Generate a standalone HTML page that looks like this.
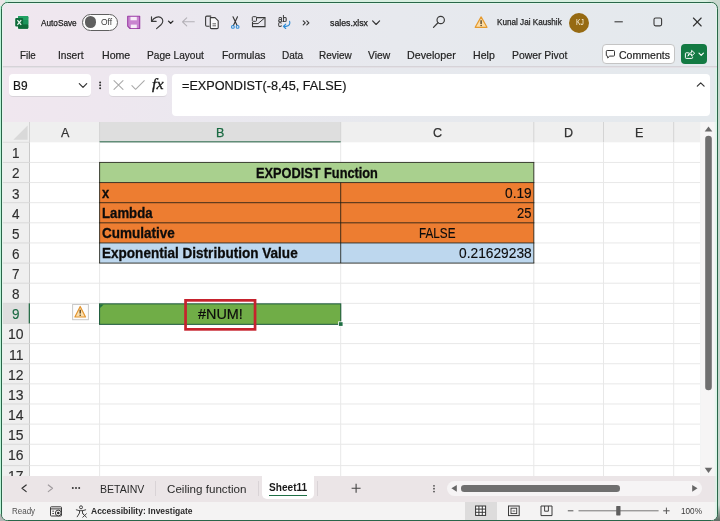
<!DOCTYPE html>
<html><head><meta charset="utf-8"><title>sales.xlsx - Excel</title>
<style>
*{box-sizing:border-box;margin:0;padding:0}
html,body{width:720px;height:521px;overflow:hidden;background:#fff}
body{font-family:"Liberation Sans",sans-serif;color:#222;position:relative}
#outer{position:absolute;left:0;top:0;width:720px;height:521px;background:linear-gradient(90deg,#b9f3d6 0,#b9f3d6 4px,#d8efe0 12px,#d8efe0 706px,#c9d8cf 714px,#c9d8cf 100%)}
#win{position:absolute;left:1px;top:2px;width:717px;height:519px;border:1px solid #2a664a;border-radius:6.5px;box-shadow:inset 0 0 0 1px #e0f5e9;
 background:linear-gradient(90deg,#f0e7ef 0%,#eee7ef 14%,#eae8ef 30%,#e7e9ee 55%,#e4e9ed 100%)}
#ui{position:absolute;left:0;top:0;width:720px;height:521px;overflow:hidden;will-change:transform;clip-path:inset(3px 3px 1px 2px round 5.5px)}
.clip{position:absolute;left:0;top:0;width:720px;height:521px}
.t{position:absolute;white-space:nowrap;line-height:1;transform-origin:0 0}
.r{position:absolute}
</style></head><body>
<div id="outer"></div>
<div style="position:absolute;left:0;top:0;width:5px;height:6px;background:#ebe6e8"></div>
<div style="position:absolute;left:0;top:514px;width:5px;height:7px;background:#b3b6b4"></div>
<div style="position:absolute;left:714px;top:505px;width:6px;height:16px;background:linear-gradient(180deg,#c9d8cf,#5d6b63)"></div>
<div id="win"></div>
<div id="ui">
<!-- title bar -->
<span class="t" style="left:41.20px;top:18.62px;font-size:8.60px;font-weight:400;color:#1c1c1c;-webkit-text-stroke:.25px #1c1c1c;transform:scaleX(0.9572);">AutoSave</span>
<div class="r" style="left:82px;top:14px;width:36px;height:17px;border:1px solid #5f5f5f;border-radius:9px;background:#fcfcfc"></div>
<div class="r" style="left:84.6px;top:16.4px;width:11.400px;height:11.400px;border-radius:50%;background:#5e5e5e"></div>
<span class="t" style="left:100.70px;top:18.96px;font-size:8.20px;font-weight:400;color:#3a3a3a;transform:scaleX(1.0291);">Off</span>
<span class="t" style="left:330.00px;top:18.55px;font-size:8.80px;font-weight:400;color:#1c1c1c;-webkit-text-stroke:.25px #1c1c1c;transform:scaleX(0.9962);">sales.xlsx</span>
<span class="t" style="left:496.80px;top:18.28px;font-size:9.00px;font-weight:400;color:#1c1c1c;-webkit-text-stroke:.25px #1c1c1c;transform:scaleX(0.9043);">Kunal Jai Kaushik</span>
<div class="r" style="left:569.4px;top:12.5px;width:20px;height:20px;border-radius:50%;background:#966a12"></div>
<span class="t" style="left:575.60px;top:18.76px;font-size:8.20px;font-weight:400;color:#fbf3df;transform:scaleX(0.8151);">KJ</span>
<svg class="r" style="left:0;top:0" width="720" height="42" viewBox="0 0 720 42">
<!-- excel logo -->
<rect x="14.400" y="15.400" width="14.600" height="14" rx="2" fill="#f6f3f6" opacity=".55"/>
<rect x="18" y="16" width="10.300" height="12.800" rx="1.200" fill="#17864d"/>
<rect x="18" y="16" width="10.300" height="4.300" rx="1" fill="#22a163"/>
<rect x="23" y="20.200" width="5.300" height="4.300" fill="#1a935a"/>
<rect x="18" y="24.500" width="10.300" height="4.300" rx="1" fill="#0f6a39"/>
<rect x="15.200" y="18" width="7.900" height="8.500" rx="1" fill="#0e6b3a"/>
<path d="M17.400 20.100L21.200 24.800M21.200 20.100L17.400 24.800" stroke="#e9f6ee" stroke-width="1.250" fill="none"/>
<!-- save -->
<path d="M127.700 16.300H139.700V28.500H130L127.700 26.200Z" fill="#c985d0" stroke="#9b3fa5" stroke-width="1.100" stroke-linejoin="round"/>
<rect x="130.500" y="16.900" width="6.300" height="3.400" fill="#f7ecf8"/>
<rect x="130.800" y="24.600" width="6" height="3.500" fill="#f7ecf8"/>
<!-- undo -->
<path d="M151.500 16.700V21.300H156.200" fill="none" stroke="#3a3a3a" stroke-width="1.150" stroke-linecap="round" stroke-linejoin="round"/>
<path d="M151.800 21.100C154 17.600 158 15.800 160.800 17.600C163.600 19.400 163.300 22.600 161 24.800L156.600 28.600" fill="none" stroke="#3a3a3a" stroke-width="1.150" stroke-linecap="round"/>
<path d="M168.500 21.100L170.700 23.200L172.900 21.100" fill="none" stroke="#2a2a2a" stroke-width="1.300" stroke-linecap="round" stroke-linejoin="round"/>
<!-- redo (disabled arrow) -->
<path d="M194.300 21.800H182.600M186.700 17.800L182.500 21.800L186.700 25.800" fill="none" stroke="#b3b0b6" stroke-width="1.100" stroke-linecap="round" stroke-linejoin="round"/>
<!-- copy -->
<path d="M209.500 26.300H206.800Q205.600 26.300 205.600 25.100V17.300Q205.600 16.100 206.800 16.100H211.200" fill="none" stroke="#3a3a3a" stroke-width="1.100"/>
<path d="M210.300 17.600H215L218.200 20.800V27.400Q218.200 28.600 217 28.600H211.500Q210.300 28.600 210.300 27.400Z" fill="#fafafa" stroke="#3a3a3a" stroke-width="1.100" stroke-linejoin="round"/>
<path d="M212.500 23.800H216M212.500 25.800H216" stroke="#555" stroke-width=".9"/>
<!-- cut -->
<path d="M233 16.800L237.100 25.500M237.500 16.800L233.400 25.500" stroke="#333" stroke-width="1.100" stroke-linecap="round"/>
<circle cx="232.900" cy="26.900" r="1.400" fill="none" stroke="#2d8bd6" stroke-width="1.100"/>
<circle cx="237.600" cy="26.900" r="1.400" fill="none" stroke="#2d8bd6" stroke-width="1.100"/>
<!-- form icon -->
<path d="M256.500 17.600H265V26.600H252.500V22" fill="none" stroke="#3a3a3a" stroke-width="1.100"/>
<rect x="252.300" y="16.700" width="4.200" height="4.600" rx=".8" fill="none" stroke="#3a3a3a" stroke-width="1"/>
<path d="M252.500 23.600H258L264.600 18" fill="none" stroke="#3a3a3a" stroke-width="1"/>
<!-- chevrons >> -->
<path d="M303.200 20.900L305.300 22.900L303.200 24.900M306.800 20.900L308.900 22.900L306.800 24.900" fill="none" stroke="#333" stroke-width="1.100" stroke-linecap="round" stroke-linejoin="round"/>
<!-- title caret -->
<path d="M372.600 20.900L376.100 24.500L379.600 20.900" fill="none" stroke="#333" stroke-width="1.150" stroke-linecap="round" stroke-linejoin="round"/>
<!-- search -->
<circle cx="440.700" cy="20" r="3.700" fill="none" stroke="#3a3a3a" stroke-width="1.150"/>
<path d="M438 22.800L433.500 27.400" stroke="#3a3a3a" stroke-width="1.250" stroke-linecap="round"/>
<!-- warning -->
<path d="M481.100 16.900L487 27.300H475.200Z" fill="#fbdca6" stroke="#e59a2e" stroke-width="1.200" stroke-linejoin="round"/>
<path d="M481.100 20.200V24" stroke="#4d3b1c" stroke-width="1.300"/>
<circle cx="481.100" cy="25.500" r=".75" fill="#4d3b1c"/>
<!-- window controls -->
<path d="M614.500 21.800H622.800" stroke="#3a3a3a" stroke-width="1.100"/>
<rect x="654" y="18" width="7.600" height="7.900" rx="1.600" fill="none" stroke="#3a3a3a" stroke-width="1.100"/>
<path d="M693.400 18L701.200 26M701.200 18L693.400 26" stroke="#333" stroke-width="1.100" stroke-linecap="round"/>
</svg>
<span class="t" style="left:278.00px;top:15.66px;font-size:8.20px;font-weight:400;color:#2a2a2a;-webkit-text-stroke:.2px #2a2a2a;transform:scaleX(0.9867);">ab</span>
<span class="t" style="left:278.00px;top:21.46px;font-size:8.20px;font-weight:400;color:#2a2a2a;-webkit-text-stroke:.2px #2a2a2a;transform:scaleX(0.9268);">c</span>
<svg class="r" style="left:280px;top:20px" width="12" height="10" viewBox="280 20 12 10"><path d="M289.600 21.400Q291 25.400 286 26.400H283.600M285.700 24.200L283.400 26.400L285.700 28.500" fill="none" stroke="#2d8bd6" stroke-width="1.150" stroke-linecap="round" stroke-linejoin="round"/></svg>
<!-- ribbon tabs -->
<span class="t" style="left:20.00px;top:50.22px;font-size:11.20px;font-weight:400;color:#222;-webkit-text-stroke:.2px #222;transform:scaleX(0.8755);">File</span>
<span class="t" style="left:58.30px;top:50.22px;font-size:11.20px;font-weight:400;color:#222;-webkit-text-stroke:.2px #222;transform:scaleX(0.9103);">Insert</span>
<span class="t" style="left:101.50px;top:50.22px;font-size:11.20px;font-weight:400;color:#222;-webkit-text-stroke:.2px #222;transform:scaleX(0.9472);">Home</span>
<span class="t" style="left:147.30px;top:50.22px;font-size:11.20px;font-weight:400;color:#222;-webkit-text-stroke:.2px #222;transform:scaleX(0.9062);">Page Layout</span>
<span class="t" style="left:221.80px;top:50.22px;font-size:11.20px;font-weight:400;color:#222;-webkit-text-stroke:.2px #222;transform:scaleX(0.9319);">Formulas</span>
<span class="t" style="left:281.80px;top:50.22px;font-size:11.20px;font-weight:400;color:#222;-webkit-text-stroke:.2px #222;transform:scaleX(0.8961);">Data</span>
<span class="t" style="left:319.30px;top:50.22px;font-size:11.20px;font-weight:400;color:#222;-webkit-text-stroke:.2px #222;transform:scaleX(0.8904);">Review</span>
<span class="t" style="left:368.30px;top:50.22px;font-size:11.20px;font-weight:400;color:#222;-webkit-text-stroke:.2px #222;transform:scaleX(0.9221);">View</span>
<span class="t" style="left:407.00px;top:50.22px;font-size:11.20px;font-weight:400;color:#222;-webkit-text-stroke:.2px #222;transform:scaleX(0.9559);">Developer</span>
<span class="t" style="left:472.50px;top:50.22px;font-size:11.20px;font-weight:400;color:#222;-webkit-text-stroke:.2px #222;transform:scaleX(0.9464);">Help</span>
<span class="t" style="left:511.50px;top:50.22px;font-size:11.20px;font-weight:400;color:#222;-webkit-text-stroke:.2px #222;transform:scaleX(0.9287);">Power Pivot</span>
<div class="r" style="left:602px;top:44px;width:73px;height:20px;border:1px solid #c4c4c4;border-radius:4px;background:#fefefe"></div>
<span class="t" style="left:619.00px;top:50.22px;font-size:11.20px;font-weight:400;color:#222;-webkit-text-stroke:.2px #222;transform:scaleX(0.9419);">Comments</span>
<div class="r" style="left:681px;top:44px;width:26px;height:20px;border-radius:4px;background:#137a43"></div>
<svg class="r" style="left:600px;top:42px" width="120" height="26" viewBox="600 42 120 26">
<path d="M607.200 50.500H613.600Q614.500 50.500 614.500 51.400V55.200Q614.500 56.100 613.600 56.100H609.700L607.700 58V56.100H607.200Q606.300 56.100 606.300 55.200V51.400Q606.300 50.500 607.200 50.500Z" fill="none" stroke="#333" stroke-width="1" stroke-linejoin="round"/>
<path d="M688.800 52.800H686.200Q685.400 52.800 685.400 53.600V57.600Q685.400 58.400 686.200 58.400H691.800Q692.600 58.400 692.600 57.600V56.600" fill="none" stroke="#fff" stroke-width="1"/>
<path d="M687.900 56.200Q688.300 52.600 691.600 52.400V50.400L694.700 53.200L691.600 56V54Q689.300 54 687.900 56.200Z" fill="none" stroke="#fff" stroke-width=".95" stroke-linejoin="round"/>
<path d="M699 53.200L701.200 55.300L703.400 53.200" fill="none" stroke="#fff" stroke-width="1.150" stroke-linecap="round" stroke-linejoin="round"/>
</svg>
<div class="r" style="left:2.00px;top:66.00px;width:715.00px;height:1.00px;background:#d6d3d8;"></div>
<div class="r" style="left:2.00px;top:67.00px;width:715.00px;height:1.00px;background:#e3e0e5;"></div>
<!-- formula bar -->
<div class="r" style="left:9px;top:74px;width:82px;height:22.500px;border-radius:4px;background:#fff;border-bottom:1px solid #d8d3d9"></div>
<span class="t" style="left:13.20px;top:78.83px;font-size:13.20px;font-weight:400;color:#161616;-webkit-text-stroke:.2px #161616;transform:scaleX(0.9042);">B9</span>
<div class="r" style="left:109px;top:74px;width:58px;height:22.500px;border-radius:4px;background:#fff;border-bottom:1px solid #d8d3d9"></div>
<div class="r" style="left:172px;top:74px;width:538px;height:42px;border-radius:4px;background:#fff"></div>
<span class="t" style="left:182.00px;top:79.26px;font-size:13.40px;font-weight:400;color:#161616;-webkit-text-stroke:.2px #161616;transform:scaleX(0.9460);">=EXPONDIST(-8,45, FALSE)</span>
<span class="t" style="left:152.2px;top:77px;font-family:'Liberation Serif',serif;font-style:italic;font-weight:400;font-size:14.5px;color:#1a1a1a;-webkit-text-stroke:.35px #1a1a1a;transform:scaleX(1.1)">fx</span>
<svg class="r" style="left:0;top:70px" width="720" height="50" viewBox="0 70 720 50">
<path d="M79.300 83.700L83 87.400L86.700 83.700" fill="none" stroke="#333" stroke-width="1.200" stroke-linecap="round" stroke-linejoin="round"/>
<circle cx="100.100" cy="82.400" r="1" fill="#333"/><circle cx="100.100" cy="85.300" r="1" fill="#333"/><circle cx="100.100" cy="88.200" r="1" fill="#333"/>
<path d="M114 80.600L123 89.400M123 80.600L114 89.400" stroke="#a9a9a9" stroke-width="1.050" stroke-linecap="round"/>
<path d="M131.900 85.600L135.600 89.300L144.300 80.700" fill="none" stroke="#a9a9a9" stroke-width="1.050" stroke-linecap="round" stroke-linejoin="round"/>
<path d="M697.300 86.200L700.700 82.800L704.100 86.200" fill="none" stroke="#333" stroke-width="1.200" stroke-linecap="round" stroke-linejoin="round"/>
</svg>
<!-- grid -->
<div class="clip" style="clip-path:inset(122px 3px 45px 2px)">
<svg class="r" style="left:0;top:0" width="720" height="521" viewBox="0 0 720 521"><rect x="2.00" y="122.00" width="698.20" height="355.00" fill="#fff"/><rect x="2.00" y="122.00" width="698.20" height="20.30" fill="#efefef"/><rect x="2.00" y="142.30" width="27.50" height="335.00" fill="#efefef"/><rect x="99.60" y="122.00" width="241.10" height="20.30" fill="#dedede"/><rect x="2.00" y="303.34" width="27.50" height="20.13" fill="#dedede"/><rect x="29.00" y="122.00" width="1.00" height="20.30" fill="#d4d4d4"/><rect x="29.00" y="142.30" width="1.00" height="335.00" fill="#c9c9c9"/><rect x="99.10" y="122.00" width="1.00" height="20.30" fill="#d4d4d4"/><rect x="99.10" y="142.30" width="1.00" height="335.00" fill="#e8e8e8"/><rect x="340.20" y="122.00" width="1.00" height="20.30" fill="#d4d4d4"/><rect x="340.20" y="142.30" width="1.00" height="335.00" fill="#e8e8e8"/><rect x="533.30" y="122.00" width="1.00" height="20.30" fill="#d4d4d4"/><rect x="533.30" y="142.30" width="1.00" height="335.00" fill="#e8e8e8"/><rect x="603.00" y="122.00" width="1.00" height="20.30" fill="#d4d4d4"/><rect x="603.00" y="142.30" width="1.00" height="335.00" fill="#e8e8e8"/><rect x="673.20" y="122.00" width="1.00" height="20.30" fill="#d4d4d4"/><rect x="673.20" y="142.30" width="1.00" height="335.00" fill="#e8e8e8"/><rect x="29.50" y="161.93" width="670.70" height="1.00" fill="#e8e8e8"/><rect x="2.00" y="161.93" width="27.50" height="1.00" fill="#d9d9d9"/><rect x="29.50" y="182.06" width="670.70" height="1.00" fill="#e8e8e8"/><rect x="2.00" y="182.06" width="27.50" height="1.00" fill="#d9d9d9"/><rect x="29.50" y="202.19" width="670.70" height="1.00" fill="#e8e8e8"/><rect x="2.00" y="202.19" width="27.50" height="1.00" fill="#d9d9d9"/><rect x="29.50" y="222.32" width="670.70" height="1.00" fill="#e8e8e8"/><rect x="2.00" y="222.32" width="27.50" height="1.00" fill="#d9d9d9"/><rect x="29.50" y="242.45" width="670.70" height="1.00" fill="#e8e8e8"/><rect x="2.00" y="242.45" width="27.50" height="1.00" fill="#d9d9d9"/><rect x="29.50" y="262.58" width="670.70" height="1.00" fill="#e8e8e8"/><rect x="2.00" y="262.58" width="27.50" height="1.00" fill="#d9d9d9"/><rect x="29.50" y="282.71" width="670.70" height="1.00" fill="#e8e8e8"/><rect x="2.00" y="282.71" width="27.50" height="1.00" fill="#d9d9d9"/><rect x="29.50" y="302.84" width="670.70" height="1.00" fill="#e8e8e8"/><rect x="2.00" y="302.84" width="27.50" height="1.00" fill="#d9d9d9"/><rect x="29.50" y="322.97" width="670.70" height="1.00" fill="#e8e8e8"/><rect x="2.00" y="322.97" width="27.50" height="1.00" fill="#d9d9d9"/><rect x="29.50" y="343.10" width="670.70" height="1.00" fill="#e8e8e8"/><rect x="2.00" y="343.10" width="27.50" height="1.00" fill="#d9d9d9"/><rect x="29.50" y="363.23" width="670.70" height="1.00" fill="#e8e8e8"/><rect x="2.00" y="363.23" width="27.50" height="1.00" fill="#d9d9d9"/><rect x="29.50" y="383.36" width="670.70" height="1.00" fill="#e8e8e8"/><rect x="2.00" y="383.36" width="27.50" height="1.00" fill="#d9d9d9"/><rect x="29.50" y="403.49" width="670.70" height="1.00" fill="#e8e8e8"/><rect x="2.00" y="403.49" width="27.50" height="1.00" fill="#d9d9d9"/><rect x="29.50" y="423.62" width="670.70" height="1.00" fill="#e8e8e8"/><rect x="2.00" y="423.62" width="27.50" height="1.00" fill="#d9d9d9"/><rect x="29.50" y="443.75" width="670.70" height="1.00" fill="#e8e8e8"/><rect x="2.00" y="443.75" width="27.50" height="1.00" fill="#d9d9d9"/><rect x="29.50" y="465.10" width="670.70" height="1.00" fill="#e8e8e8"/><rect x="2.00" y="465.10" width="27.50" height="1.00" fill="#d9d9d9"/><rect x="2.00" y="141.80" width="27.50" height="1.00" fill="#dcdcdc"/><rect x="99.60" y="141.20" width="241.10" height="1.20" fill="#44795f"/><rect x="28.70" y="303.34" width="1.30" height="20.13" fill="#2a6e4a"/><path d="M27.6 125.4V139.8H13.3Z" fill="#d9d9d9"/><rect x="99.60" y="162.43" width="434.20" height="20.13" fill="#a9d08e"/><rect x="99.60" y="182.56" width="434.20" height="60.39" fill="#ed7d31"/><rect x="99.60" y="242.95" width="434.20" height="20.13" fill="#bdd7ee"/><rect x="99.10" y="161.93" width="435.20" height="1.00" fill="#1c1c14" opacity=".82"/><rect x="99.10" y="182.06" width="435.20" height="1.00" fill="#1c1c14" opacity=".82"/><rect x="99.10" y="202.19" width="435.20" height="1.00" fill="#1c1c14" opacity=".82"/><rect x="99.10" y="222.32" width="435.20" height="1.00" fill="#1c1c14" opacity=".82"/><rect x="99.10" y="242.45" width="435.20" height="1.00" fill="#1c1c14" opacity=".82"/><rect x="99.10" y="262.58" width="435.20" height="1.00" fill="#1c1c14" opacity=".82"/><rect x="99.10" y="162.43" width="1.00" height="100.65" fill="#1c1c14" opacity=".82"/><rect x="533.30" y="162.43" width="1.00" height="100.65" fill="#1c1c14" opacity=".82"/><rect x="340.20" y="182.56" width="1.00" height="80.52" fill="#1c1c14" opacity=".82"/><rect x="99.00" y="303.30" width="242.30" height="21.60" fill="#235f3f"/><rect x="100.10" y="304.40" width="240.10" height="19.40" fill="#70ad47"/><path d="M100.10 304.40h3.6l-3.600 3.600Z" fill="#1f6e43"/><rect x="338.10" y="321.40" width="5.00" height="5.00" fill="#fff"/><rect x="338.90" y="322.20" width="3.70" height="3.70" fill="#1f6e43"/><rect x="185.55" y="300.35" width="69.5" height="29" fill="none" stroke="#c6222d" stroke-width="2.7"/><rect x="72.6" y="304.5" width="15.8" height="15.2" fill="#fdfdfd" stroke="#c9c9c9" stroke-width="1"/><path d="M80.2 306.5L85.5 317H74.9Z" fill="#fbdfae" stroke="#e2942f" stroke-width="1.2" stroke-linejoin="round"/><path d="M80.2 309.7V313.6" stroke="#4d3b1c" stroke-width="1.3"/><circle cx="80.2" cy="315.2" r=".75" fill="#4d3b1c"/><rect x="700.20" y="122.00" width="17.00" height="355.00" fill="#f6f5f5"/><path d="M708.5 126.4L712.3 131.6H704.7Z" fill="#6a6a6a"/><rect x="705.2" y="135.8" width="6.6" height="254.4" rx="3.3" fill="#6f6f6f"/><path d="M708.5 473L712.3 467.8H704.7Z" fill="#6a6a6a"/></svg>
<span class="t" style="left:61.12px;top:126.13px;font-size:13.20px;font-weight:400;color:#333;-webkit-text-stroke:.25px #333;transform:scaleX(0.9500);">A</span>
<span class="t" style="left:216.12px;top:126.13px;font-size:13.20px;font-weight:400;color:#1a6a42;-webkit-text-stroke:.25px #1a6a42;transform:scaleX(0.9500);">B</span>
<span class="t" style="left:432.67px;top:126.13px;font-size:13.20px;font-weight:400;color:#333;-webkit-text-stroke:.25px #333;transform:scaleX(0.9500);">C</span>
<span class="t" style="left:563.97px;top:126.13px;font-size:13.20px;font-weight:400;color:#333;-webkit-text-stroke:.25px #333;transform:scaleX(0.9500);">D</span>
<span class="t" style="left:634.62px;top:126.13px;font-size:13.20px;font-weight:400;color:#333;-webkit-text-stroke:.25px #333;transform:scaleX(0.9500);">E</span>
<span class="t" style="left:12.15px;top:145.30px;font-size:15.00px;font-weight:400;color:#2e2e2e;-webkit-text-stroke:.15px #2e2e2e;transform:scaleX(0.9000);">1</span>
<span class="t" style="left:12.15px;top:165.43px;font-size:15.00px;font-weight:400;color:#2e2e2e;-webkit-text-stroke:.15px #2e2e2e;transform:scaleX(0.9000);">2</span>
<span class="t" style="left:12.15px;top:185.56px;font-size:15.00px;font-weight:400;color:#2e2e2e;-webkit-text-stroke:.15px #2e2e2e;transform:scaleX(0.9000);">3</span>
<span class="t" style="left:12.15px;top:205.69px;font-size:15.00px;font-weight:400;color:#2e2e2e;-webkit-text-stroke:.15px #2e2e2e;transform:scaleX(0.9000);">4</span>
<span class="t" style="left:12.15px;top:225.82px;font-size:15.00px;font-weight:400;color:#2e2e2e;-webkit-text-stroke:.15px #2e2e2e;transform:scaleX(0.9000);">5</span>
<span class="t" style="left:12.15px;top:245.95px;font-size:15.00px;font-weight:400;color:#2e2e2e;-webkit-text-stroke:.15px #2e2e2e;transform:scaleX(0.9000);">6</span>
<span class="t" style="left:12.15px;top:266.08px;font-size:15.00px;font-weight:400;color:#2e2e2e;-webkit-text-stroke:.15px #2e2e2e;transform:scaleX(0.9000);">7</span>
<span class="t" style="left:12.15px;top:286.21px;font-size:15.00px;font-weight:400;color:#2e2e2e;-webkit-text-stroke:.15px #2e2e2e;transform:scaleX(0.9000);">8</span>
<span class="t" style="left:12.15px;top:306.34px;font-size:15.00px;font-weight:400;color:#1a6a42;-webkit-text-stroke:.15px #1a6a42;transform:scaleX(0.9000);">9</span>
<span class="t" style="left:8.24px;top:326.47px;font-size:15.00px;font-weight:400;color:#2e2e2e;-webkit-text-stroke:.15px #2e2e2e;transform:scaleX(0.9300);">10</span>
<span class="t" style="left:8.76px;top:346.60px;font-size:15.00px;font-weight:400;color:#2e2e2e;-webkit-text-stroke:.15px #2e2e2e;transform:scaleX(0.9300);">11</span>
<span class="t" style="left:8.24px;top:366.73px;font-size:15.00px;font-weight:400;color:#2e2e2e;-webkit-text-stroke:.15px #2e2e2e;transform:scaleX(0.9300);">12</span>
<span class="t" style="left:8.24px;top:386.86px;font-size:15.00px;font-weight:400;color:#2e2e2e;-webkit-text-stroke:.15px #2e2e2e;transform:scaleX(0.9300);">13</span>
<span class="t" style="left:8.24px;top:406.99px;font-size:15.00px;font-weight:400;color:#2e2e2e;-webkit-text-stroke:.15px #2e2e2e;transform:scaleX(0.9300);">14</span>
<span class="t" style="left:8.24px;top:427.12px;font-size:15.00px;font-weight:400;color:#2e2e2e;-webkit-text-stroke:.15px #2e2e2e;transform:scaleX(0.9300);">15</span>
<span class="t" style="left:8.24px;top:447.25px;font-size:15.00px;font-weight:400;color:#2e2e2e;-webkit-text-stroke:.15px #2e2e2e;transform:scaleX(0.9300);">16</span>
<span class="t" style="left:8.24px;top:468.20px;font-size:15.00px;font-weight:400;color:#2e2e2e;-webkit-text-stroke:.15px #2e2e2e;transform:scaleX(0.9300);">17</span>
<span class="t" style="left:256.00px;top:165.97px;font-size:14.40px;font-weight:700;color:#0c0c0c;-webkit-text-stroke:.3px #0c0c0c;transform:scaleX(0.8866);">EXPODIST Function</span>
<span class="t" style="left:101.60px;top:186.10px;font-size:14.40px;font-weight:700;color:#0c0c0c;-webkit-text-stroke:.3px #0c0c0c;transform:scaleX(0.8990);">x</span>
<span class="t" style="left:101.70px;top:206.23px;font-size:14.40px;font-weight:700;color:#0c0c0c;-webkit-text-stroke:.3px #0c0c0c;transform:scaleX(0.9165);">Lambda</span>
<span class="t" style="left:101.70px;top:226.36px;font-size:14.40px;font-weight:700;color:#0c0c0c;-webkit-text-stroke:.3px #0c0c0c;transform:scaleX(0.9379);">Cumulative</span>
<span class="t" style="left:101.70px;top:246.49px;font-size:14.40px;font-weight:700;color:#0c0c0c;-webkit-text-stroke:.3px #0c0c0c;transform:scaleX(0.9412);">Exponential Distribution Value</span>
<span class="t" style="left:504.50px;top:184.69px;font-size:15.00px;font-weight:400;color:#0c0c0c;-webkit-text-stroke:.15px #0c0c0c;transform:scaleX(0.9145);">0.19</span>
<span class="t" style="left:516.80px;top:204.82px;font-size:15.00px;font-weight:400;color:#0c0c0c;-webkit-text-stroke:.15px #0c0c0c;transform:scaleX(0.8630);">25</span>
<span class="t" style="left:419.00px;top:224.95px;font-size:15.00px;font-weight:400;color:#0c0c0c;-webkit-text-stroke:.15px #0c0c0c;transform:scaleX(0.7817);">FALSE</span>
<span class="t" style="left:458.50px;top:245.08px;font-size:15.00px;font-weight:400;color:#0c0c0c;-webkit-text-stroke:.15px #0c0c0c;transform:scaleX(0.9173);">0.21629238</span>
<span class="t" style="left:197.80px;top:306.47px;font-size:15.00px;font-weight:400;color:#0c0c0c;-webkit-text-stroke:.2px #0c0c0c;transform:scaleX(0.9599);">#NUM!</span>
</div>
<!-- sheet tabs -->
<div class="r" style="left:2.00px;top:476.00px;width:715.00px;height:26.00px;background:#ebe5e7;"></div>
<span class="t" style="left:99.80px;top:484.21px;font-size:11.80px;font-weight:400;color:#2a2a2a;transform:scaleX(0.8949);">BETAINV</span>
<span class="t" style="left:167.00px;top:484.21px;font-size:11.80px;font-weight:400;color:#2a2a2a;transform:scaleX(0.9841);">Ceiling function</span>
<div class="r" style="left:261.5px;top:476px;width:52.5px;height:22.5px;border-radius:0 0 5px 5px;background:#fff"></div>
<span class="t" style="left:268.90px;top:482.01px;font-size:11.80px;font-weight:700;color:#1a1a1a;transform:scaleX(0.8563);">Sheet11</span>
<div class="r" style="left:268.90px;top:494.50px;width:38.20px;height:1.70px;background:#1e6f45;"></div>
<div class="r" style="left:155.00px;top:481.00px;width:1.00px;height:15.00px;background:#d9d3d6;"></div>
<div class="r" style="left:258.30px;top:481.00px;width:1.00px;height:15.00px;background:#d9d3d6;"></div>
<div class="r" style="left:316.50px;top:481.00px;width:1.00px;height:15.00px;background:#d9d3d6;"></div>
<div class="r" style="left:447px;top:481px;width:255px;height:14.5px;border-radius:7.5px;background:#f6f4f5"></div>
<div class="r" style="left:461.4px;top:485px;width:158.4px;height:6.6px;border-radius:3.3px;background:#6f6f6f"></div>
<svg class="r" style="left:0;top:476px" width="720" height="45" viewBox="0 476 720 45">
<path d="M26.200 485L22 488.300L26.200 491.600" fill="none" stroke="#333" stroke-width="1.200" stroke-linecap="round" stroke-linejoin="round"/>
<path d="M48.300 485L52.500 488.300L48.300 491.600" fill="none" stroke="#a09b9e" stroke-width="1.200" stroke-linecap="round" stroke-linejoin="round"/>
<circle cx="72.800" cy="488.100" r="1" fill="#333"/><circle cx="76" cy="488.100" r="1" fill="#333"/><circle cx="79.200" cy="488.100" r="1" fill="#333"/>
<path d="M351.600 488.300H360.600M356.100 483.800V492.800" stroke="#444" stroke-width="1.100"/>
<circle cx="434" cy="485.800" r=".85" fill="#444"/><circle cx="434" cy="488.700" r=".85" fill="#444"/><circle cx="434" cy="491.600" r=".85" fill="#444"/>
<path d="M456.800 484.900L451.400 488.300L456.800 491.700Z" fill="#666"/>
<path d="M692.200 484.900L697.500 488.300L692.200 491.700Z" fill="#666"/>
</svg>
<!-- status bar -->
<div class="r" style="left:2.00px;top:502.00px;width:715.00px;height:19.00px;background:#f4f3f3;"></div>
<span class="t" style="left:11.90px;top:507.45px;font-size:8.80px;font-weight:400;color:#505050;transform:scaleX(0.9081);">Ready</span>
<span class="t" style="left:90.80px;top:507.45px;font-size:8.80px;font-weight:700;color:#2a2a2a;transform:scaleX(0.9652);">Accessibility: Investigate</span>
<span class="t" style="left:680.60px;top:507.45px;font-size:8.80px;font-weight:400;color:#3a3a3a;transform:scaleX(0.9286);">100%</span>
<div class="r" style="left:464.70px;top:502.00px;width:32.30px;height:19.00px;background:#dddcdc;"></div>
<svg class="r" style="left:0;top:500px" width="720" height="21" viewBox="0 500 720 21">
<!-- macro record icon -->
<rect x="50.500" y="506.800" width="11" height="9.200" rx=".8" fill="none" stroke="#3a3a3a" stroke-width="1"/>
<path d="M50.500 508.900H61.500" stroke="#3a3a3a" stroke-width="1"/>
<path d="M52.300 511.200H54M52.300 513.500H54" stroke="#3a3a3a" stroke-width=".9"/>
<circle cx="58.300" cy="513" r="2.900" fill="#f3f2f2" stroke="#3a3a3a" stroke-width="1"/>
<circle cx="58.300" cy="513" r="1.300" fill="#2a2a2a"/>
<!-- accessibility icon -->
<circle cx="81" cy="507.300" r="1.500" fill="none" stroke="#3a3a3a" stroke-width=".95"/>
<path d="M76.300 509.800L79.500 510.700V513L77.200 516.800M85.700 509.800L82.500 510.700V513L83.600 514.500M79.500 510.700H82.500" fill="none" stroke="#3a3a3a" stroke-width=".95" stroke-linecap="round" stroke-linejoin="round"/>
<path d="M82.800 513.800L86.400 517.200M86.400 513.800L82.800 517.200" stroke="#3a3a3a" stroke-width=".95" stroke-linecap="round"/>
<!-- view: normal -->
<rect x="475.600" y="506" width="10" height="9.400" fill="#fff" stroke="#333" stroke-width="1"/>
<path d="M478.900 506V515.400M482.300 506V515.400M475.600 509.100H485.600M475.600 512.300H485.600" stroke="#333" stroke-width=".95"/>
<!-- view: page layout -->
<rect x="508.500" y="506" width="10.700" height="9.600" fill="none" stroke="#3a3a3a" stroke-width="1"/>
<rect x="511" y="508.200" width="5.700" height="5.400" fill="none" stroke="#3a3a3a" stroke-width=".9"/>
<path d="M512.500 511H515.200" stroke="#3a3a3a" stroke-width=".8"/>
<!-- view: page break -->
<path d="M541 506H552V515.600H541Z" fill="none" stroke="#3a3a3a" stroke-width="1"/>
<path d="M544.600 506V511.200H548.400V506" fill="none" stroke="#3a3a3a" stroke-width=".95"/>
<!-- zoom slider -->
<path d="M567.800 510.800H573.400" stroke="#555" stroke-width="1"/>
<path d="M578.500 510.800H658.600" stroke="#777" stroke-width="1"/>
<rect x="616.200" y="506" width="4.300" height="9.400" rx=".6" fill="#5f5f5f"/>
<path d="M663.200 510.800H669.600M666.400 507.600V514" stroke="#555" stroke-width="1"/>
</svg>
<!-- edge glow -->
<div class="r" style="left:713.5px;top:68px;width:3.5px;height:452px;background:linear-gradient(90deg,rgba(220,247,233,0),rgba(214,246,230,.95))"></div>
<div class="r" style="left:2px;top:3px;width:1px;height:517px;background:rgba(226,247,236,.8)"></div>
<div class="r" style="left:2px;top:3px;width:715px;height:1px;background:rgba(226,247,236,.8)"></div>
</div>
</body></html>
